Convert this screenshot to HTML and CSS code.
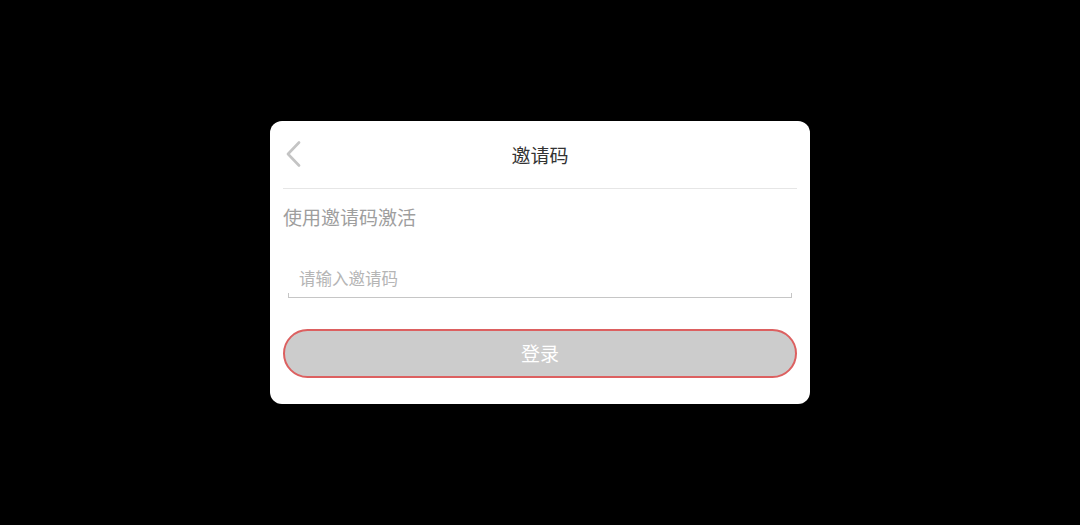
FILE: index.html
```html
<!DOCTYPE html>
<html lang="zh">
<head>
<meta charset="utf-8">
<link rel="stylesheet" href="styles.css">
</head>
<body>
<div class="card">
  <div class="header">
    <svg class="back" width="16" height="26" viewBox="0 0 16 26"><path d="M14 1.5 L3 13 L14 24.5" fill="none" stroke="#c4c4c4" stroke-width="2.6" stroke-linecap="round" stroke-linejoin="round"/></svg>
    <div class="title">邀请码</div>
  </div>
  <div class="subtitle">使用邀请码激活</div>
  <div class="field">
    <input class="input" type="text" placeholder="请输入邀请码">
  </div>
  <button class="btn">登录</button>
</div>
</body>
</html>
```
FILE: styles.css
```css
html, body {
  margin: 0;
  padding: 0;
  background: #000;
  width: 1080px;
  height: 525px;
  overflow: hidden;
  font-family: "Noto Sans CJK SC", "Noto Sans", sans-serif;
}
.card {
  margin: 121px 0 0 270px;
  width: 540px;
  height: 283px;
  box-sizing: border-box;
  background: #fff;
  border-radius: 12px;
  padding: 0 13px;
  display: flex;
  flex-direction: column;
}
.header {
  position: relative;
  height: 67px;
  border-bottom: 1px solid #e6e6e6;
  display: flex;
  align-items: center;
  justify-content: center;
}
.back {
  position: absolute;
  left: 2px;
  top: 20px;
}
.title {
  font-size: 19px;
  color: #333;
  line-height: 27px;
}
.subtitle {
  margin-top: 14px;
  font-size: 19px;
  line-height: 27px;
  color: #9e9e9e;
}
.field {
  position: relative;
  margin: 29px 5px 0 5px;
  height: 38px;
  border-bottom: 1px solid #c6c6c6;
}
.field::before, .field::after {
  content: "";
  position: absolute;
  bottom: 0;
  width: 1px;
  height: 4px;
  background: #c6c6c6;
}
.field::before { left: 0; }
.field::after { right: 0; }
.input {
  width: 100%;
  height: 38px;
  box-sizing: border-box;
  border: none;
  outline: none;
  background: transparent;
  padding: 0 0 0 11px;
  font-family: inherit;
  font-size: 16.5px;
  color: #333;
}
.input::placeholder {
  color: #b5b5b5;
}
.btn {
  margin-top: 31px;
  height: 49px;
  width: 100%;
  box-sizing: border-box;
  border: 2px solid #dc6060;
  border-radius: 25px;
  background: #cccccc;
  color: #fff;
  font-family: inherit;
  font-size: 19px;
  line-height: 27px;
  padding: 0 0 2px 0;
}
```
